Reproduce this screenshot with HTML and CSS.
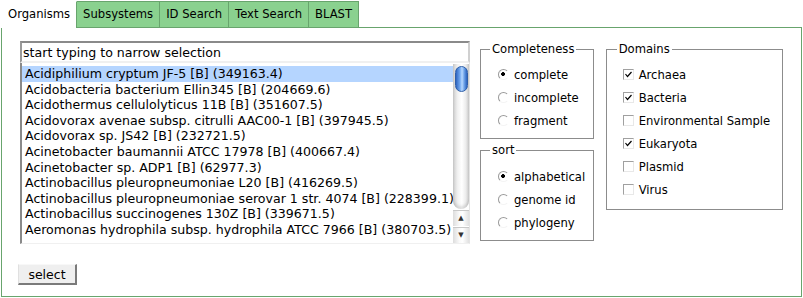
FILE: index.html
```html
<!DOCTYPE html>
<html lang="en">
<head>
    <meta charset="UTF-8">
    <title>Organism selection</title>
    <link rel="stylesheet" href="styles.css">
</head>
<body>

    <div class="tabs">
        <div class="tab active">Organisms</div>
        <div class="tab">Subsystems</div>
        <div class="tab">ID Search</div>
        <div class="tab">Text Search</div>
        <div class="tab">BLAST</div>
    </div>

    <div class="panel">
        <div class="panel-body">

            <div class="picker">
                <input class="filter" type="text" value="start typing to narrow selection">
                <div class="listbox">
                    <div class="options">
                        <div class="option selected">Acidiphilium cryptum JF-5 [B] (349163.4)</div>
                        <div class="option">Acidobacteria bacterium Ellin345 [B] (204669.6)</div>
                        <div class="option">Acidothermus cellulolyticus 11B [B] (351607.5)</div>
                        <div class="option">Acidovorax avenae subsp. citrulli AAC00-1 [B] (397945.5)</div>
                        <div class="option">Acidovorax sp. JS42 [B] (232721.5)</div>
                        <div class="option">Acinetobacter baumannii ATCC 17978 [B] (400667.4)</div>
                        <div class="option">Acinetobacter sp. ADP1 [B] (62977.3)</div>
                        <div class="option">Actinobacillus pleuropneumoniae L20 [B] (416269.5)</div>
                        <div class="option">Actinobacillus pleuropneumoniae serovar 1 str. 4074 [B] (228399.1)</div>
                        <div class="option">Actinobacillus succinogenes 130Z [B] (339671.5)</div>
                        <div class="option">Aeromonas hydrophila subsp. hydrophila ATCC 7966 [B] (380703.5)</div>
                    </div>
                    <div class="scrollbar">
                        <div class="track"><div class="thumb"></div></div>
                        <div class="arrow">&#9650;</div>
                        <div class="arrow">&#9660;</div>
                    </div>
                </div>
            </div>

            <div class="col">
                <fieldset>
                    <legend>Completeness</legend>
                    <label class="opt"><input type="radio" name="complete" checked> complete</label>
                    <label class="opt"><input type="radio" name="complete"> incomplete</label>
                    <label class="opt"><input type="radio" name="complete"> fragment</label>
                </fieldset>
                <fieldset>
                    <legend>sort</legend>
                    <label class="opt"><input type="radio" name="sort" checked> alphabetical</label>
                    <label class="opt"><input type="radio" name="sort"> genome id</label>
                    <label class="opt"><input type="radio" name="sort"> phylogeny</label>
                </fieldset>
            </div>

            <fieldset class="domains">
                <legend>Domains</legend>
                <label class="opt"><input type="checkbox" checked> Archaea</label>
                <label class="opt"><input type="checkbox" checked> Bacteria</label>
                <label class="opt"><input type="checkbox"> Environmental Sample</label>
                <label class="opt"><input type="checkbox" checked> Eukaryota</label>
                <label class="opt"><input type="checkbox"> Plasmid</label>
                <label class="opt"><input type="checkbox"> Virus</label>
            </fieldset>

        </div>

        <button class="btn">select</button>
    </div>

</body>
</html>
```

FILE: styles.css
```css
/* dasar */
body {
    margin: 1px 1px 0;
    font-family: "DejaVu Sans", Verdana, sans-serif;
    font-size: 11.6px;
    color: #000;
    background: #fff;
}

/* tab bar */
.tabs { display: flex; margin-bottom: -1px; }
.tab {
    height: 26px;
    line-height: 25px;
    padding: 0 6px;
    margin-left: -1px;
    background: #8ad18f;
    border: 1px solid #68a46d;
    border-bottom: none;
}
.tab:first-child { margin-left: 0; }
.tab.active {
    background: #fff;
    border-color: #fff #68a46d #fff #fff;
    position: relative;
    z-index: 1;
}

/* panel */
.panel {
    position: relative;
    height: 255px;
    padding: 13px 18px 0;
    background: #fff;
    border: 1px solid #68a46d;
}
.panel-body { display: flex; align-items: flex-start; }

/* list kiri */
.picker { width: 450px; font-size: 12.6px; }
.filter {
    display: block;
    box-sizing: border-box;
    width: 450px;
    height: 22px;
    margin: 0;
    padding: 0 1px;
    font: 12.6px "DejaVu Sans", Verdana, sans-serif;
    color: #000;
    border: 2px solid;
    border-color: #8a8a8a #d0d0d0 #f0f0f0 #9a9a9a;
    outline: none;
}
.listbox {
    display: flex;
    height: 180px;
    border-left: 2px solid #8a8a8a;
    border-right: 1px solid #e4e4e4;
    border-bottom: 1px solid #f0f0f0;
}
.options { flex: 1; min-width: 0; padding-top: 3px; overflow: hidden; }
.option { height: 15.6px; line-height: 15.6px; padding-left: 3px; white-space: nowrap; }
.option.selected { background: #b5d5ff; }

/* scrollbar ala aqua */
.scrollbar { width: 16px; display: flex; flex-direction: column; padding-top: 1px; }
.track {
    flex: 1;
    padding: 2px 1px 0 2px;
    border-radius: 0 0 8px 8px;
    background: linear-gradient(90deg, #cfcfcf, #f2f2f2 30%, #fff 55%, #ececec 80%, #cfcfcf);
    box-shadow: inset 0 -3px 3px rgba(0, 0, 0, 0.12);
}
.thumb {
    height: 24px;
    border: 1px solid #2f5fa8;
    border-radius: 7px;
    background: linear-gradient(90deg, #2e64c0, #6fa6ee 35%, #b7d8ff 55%, #5b93e0 80%, #2f63bd);
}
.arrow {
    height: 15px;
    margin-top: 1px;
    font-size: 7px;
    line-height: 15px;
    text-align: center;
    color: #333;
    background: linear-gradient(90deg, #dcdcdc, #fafafa 40%, #fff 60%, #e0e0e0);
    border-top: 1px solid #c8c8c8;
}

/* grup pilihan */
.col { display: flex; flex-direction: column; gap: 4px; width: 117px; margin: 1px 0 0 10px; }
fieldset {
    margin: 0;
    min-width: 0;
    padding: 7px 6px 6px 9px;
    border: 1px solid #8c8c8c;
}
.col fieldset + fieldset { padding-top: 8px; }
legend { padding: 0 2px; line-height: 14px; }
.opt { display: flex; align-items: center; height: 23px; padding-left: 8px; white-space: nowrap; }
.opt input { margin: 0 5px 0 0; flex: none; }

.domains { width: 182px; box-sizing: border-box; margin: 1px 0 0 12px; padding: 7px 6px 8px 10px; }
.domains .opt { padding-left: 6px; }

input[type=radio] {
    appearance: none;
    width: 11px;
    height: 11px;
    border-radius: 50%;
    border: 1px solid;
    border-color: #9a9a9a transparent #f4f4f4 #9a9a9a;
    background: #fff;
}
input[type=radio]:checked { background: radial-gradient(circle at 45% 45%, #000 0 1.6px, #fff 2.2px); }

input[type=checkbox] {
    appearance: none;
    width: 11px;
    height: 11px;
    border: 1px solid;
    border-color: #a0a0a0 #e8e8e8 #e8e8e8 #a0a0a0;
    background: #fff;
}
input[type=checkbox]:checked {
    background: #fff url("data:image/svg+xml,%3Csvg xmlns='http://www.w3.org/2000/svg' width='9' height='9'%3E%3Cpath d='M1.5 4 L3.5 6.5 L7.5 2' fill='none' stroke='%23000' stroke-width='1.2'/%3E%3C/svg%3E") no-repeat center;
}

.btn {
    display: block;
    margin: 20px 0 0 -2px;
    width: 59px;
    height: 21px;
    padding: 0;
    font: 12.5px "DejaVu Sans", Verdana, sans-serif;
    color: #000;
    background: #efefef;
    border: 1px solid;
    border-color: #f8f8f8 #7a7a7a #7a7a7a #e0e0e0;
    border-width: 1px 2px 2px 1px;
}
```
